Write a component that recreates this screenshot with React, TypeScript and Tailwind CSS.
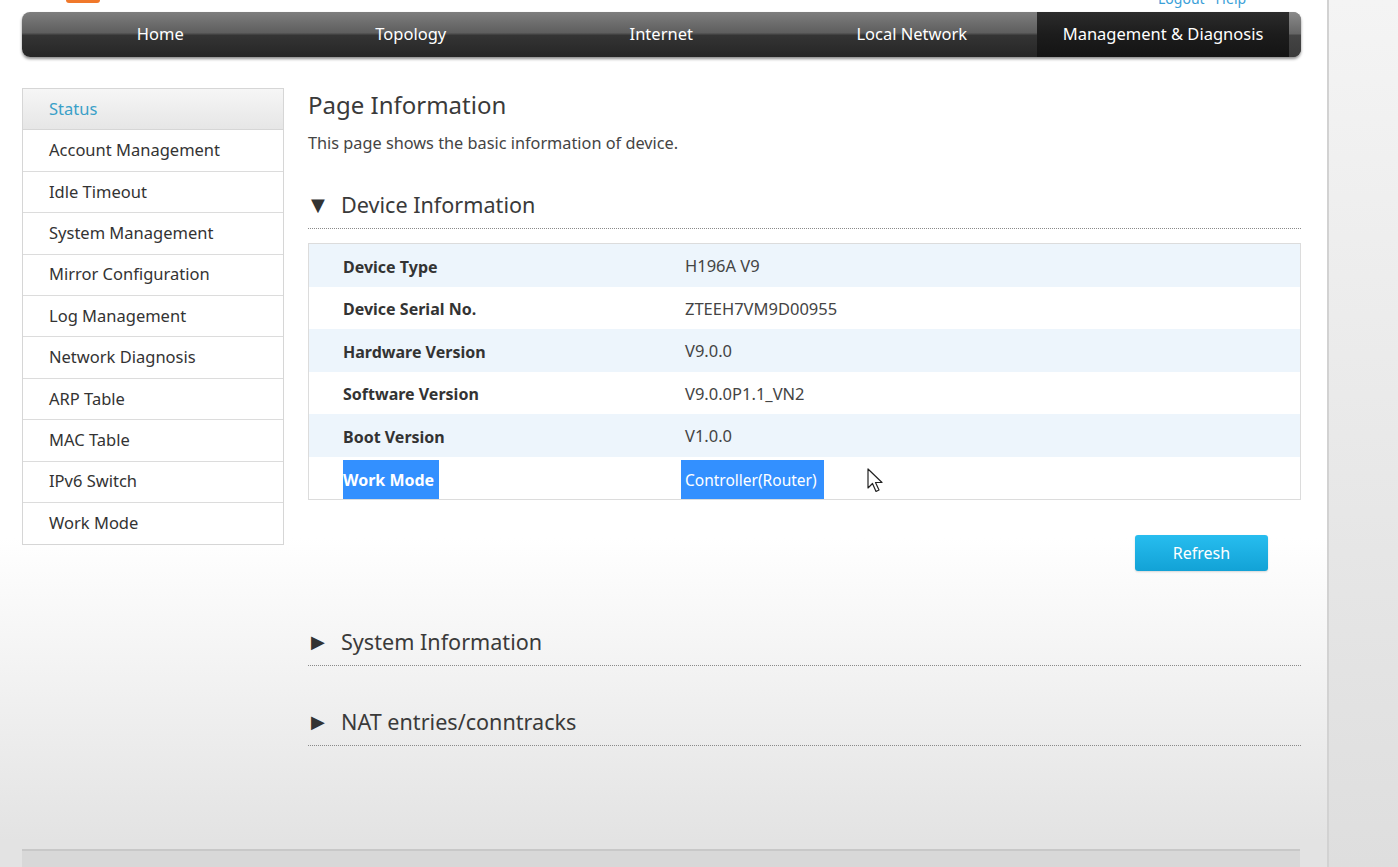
import React from 'react';

const tabs = ['Home', 'Topology', 'Internet', 'Local Network', 'Management & Diagnosis'];

const menu = [
  'Status',
  'Account Management',
  'Idle Timeout',
  'System Management',
  'Mirror Configuration',
  'Log Management',
  'Network Diagnosis',
  'ARP Table',
  'MAC Table',
  'IPv6 Switch',
  'Work Mode',
];

const rows = [
  { label: 'Device Type', value: 'H196A V9' },
  { label: 'Device Serial No.', value: 'ZTEEH7VM9D00955' },
  { label: 'Hardware Version', value: 'V9.0.0' },
  { label: 'Software Version', value: 'V9.0.0P1.1_VN2' },
  { label: 'Boot Version', value: 'V1.0.0' },
];

const font = { fontFamily: '"Noto Sans", "Open Sans", sans-serif' };

const SectionHeader: React.FC<{ title: string; open?: boolean }> = ({ title, open }) => (
  <div className="flex items-center h-[39px] pb-[9px] border-b border-dotted border-[#8a8a8a]">
    <span className="w-[33px] pl-[3px] text-[18px] leading-[30px] text-[#333]" style={{ fontFamily: '"DejaVu Sans", sans-serif' }}>
      {open ? '▼' : '▶'}
    </span>
    <span className="text-[21.6px] text-[#3a3a3a] leading-[30px]">{title}</span>
  </div>
);

const Cursor = () => (
  <svg width="18" height="26" viewBox="0 0 18 26" className="absolute left-[558px] top-[11px]">
    <path d="M1 1 L1 20 L5.5 15.5 L9 23.5 L12 22 L8.5 14.5 L15 14.5 Z" fill="#fff" stroke="#222" strokeWidth="1.2" strokeLinejoin="round" />
  </svg>
);

export default function App() {
  return (
    <div className="w-[1398px] h-[867px] overflow-hidden flex" style={font}>
      <div className="w-[1327px] h-full flex flex-col bg-[linear-gradient(to_bottom,#ffffff_0%,#ffffff_62%,#e3e3e3_97%)]">
        {/* top strip, the rest of the header is scrolled out of view */}
        <div className="relative h-[12px] shrink-0">
          <div className="absolute left-[66px] -top-[6px] w-[34px] h-[9px] rounded-b-[3px] bg-[#f0782a]" />
          <div className="absolute left-[1158px] -top-[12px] text-[14px] text-[#3aa0d8]">Logout · Help</div>
        </div>

        {/* nav bar */}
        <div className="ml-[22px] w-[1279px] h-[45px] shrink-0 flex rounded-[8px] overflow-hidden pl-[13px] bg-[linear-gradient(to_bottom,#7e7e7e_0%,#5e5e5e_46%,#343434_52%,#262626_100%)] shadow-[0_2px_3px_rgba(0,0,0,0.45)]">
          {tabs.map((t, i) => (
            <div
              key={t}
              className={
                i === 4
                  ? 'w-[252px] flex items-center justify-center text-[16.5px] text-white bg-[linear-gradient(to_bottom,#2c2c2c_0%,#1c1c1c_50%,#141414_100%)]'
                  : 'w-[250.5px] flex items-center justify-center text-[16.5px] text-white'
              }
            >
              {t}
            </div>
          ))}
          <div className="flex-1 bg-[linear-gradient(to_bottom,#8a8a8a_0%,#666_48%,#444_52%,#3a3a3a_100%)]" />
        </div>

        <div className="flex flex-1">
          {/* side menu */}
          <div className="ml-[22px] mt-[31px] w-[262px] self-start border border-[#d6d6d6] bg-white">
            {menu.map((m, i) => (
              <div
                key={m}
                className={
                  i === 0
                    ? 'h-[41.4px] flex items-center pl-[26px] text-[16.5px] text-[#3aa0c8] border-b border-[#d6d6d6] bg-[linear-gradient(to_bottom,#f6f6f6,#e6e6e6)]'
                    : 'h-[41.4px] flex items-center pl-[26px] text-[16.5px] text-[#333] border-b border-[#dcdcdc] last:border-b-0'
                }
              >
                {m}
              </div>
            ))}
          </div>

          {/* content */}
          <div className="ml-[24px] w-[993px] pt-[32px]">
            <h1 className="text-[24px] leading-[32px] text-[#3a3a3a]">Page Information</h1>
            <p className="mt-[12px] text-[16.3px] leading-[20px] text-[#444]">This page shows the basic information of device.</p>

            <div className="mt-[37px]">
              <SectionHeader title="Device Information" open />
            </div>

            <div className="mt-[14px] border border-[#dcdcdc] bg-white">
              {rows.map((r, i) => (
                <div
                  key={r.label}
                  className={
                    i % 2 === 0
                      ? 'h-[42.5px] flex items-center pt-[3px] bg-[#edf5fc]'
                      : 'h-[42.5px] flex items-center pt-[3px] bg-white'
                  }
                >
                  <div className="w-[376px] pl-[34px] text-[16px] font-bold text-[#333]">{r.label}</div>
                  <div className="text-[16.5px] text-[#444]">{r.value}</div>
                </div>
              ))}
              <div className="relative h-[42.5px] flex items-stretch bg-white">
                <div className="w-[376px] pl-[34px] pt-[3px] flex">
                  <span className="w-[96px] flex items-center pt-[2px] bg-[#3390ff] text-[16px] font-bold text-white whitespace-nowrap">
                    Work Mode
                  </span>
                </div>
                <div className="-ml-[4px] pt-[3px] flex">
                  <span className="w-[143px] flex items-center pt-[2px] pl-[4px] bg-[#3390ff] text-[15.5px] text-white whitespace-nowrap">
                    Controller(Router)
                  </span>
                </div>
                <Cursor />
              </div>
            </div>

            <div className="mt-[35px] flex justify-end pr-[33px]">
              <button className="w-[133px] h-[36px] rounded-[3px] text-[16px] text-white bg-[linear-gradient(to_bottom,#27bdef,#12a2d6)] shadow-[0_1px_2px_rgba(0,0,0,0.15)]">
                Refresh
              </button>
            </div>

            <div className="mt-[56px]">
              <SectionHeader title="System Information" />
            </div>
            <div className="mt-[41px]">
              <SectionHeader title="NAT entries/conntracks" />
            </div>
          </div>
        </div>

        {/* footer edge */}
        <div className="ml-[22px] w-[1278px] h-[18px] shrink-0 border-t-2 border-[#c8c8c8] bg-[#d8d8d8]" />
      </div>

      {/* right gutter */}
      <div className="flex-1 h-full border-l-2 border-[#d2d2d2] bg-[linear-gradient(to_bottom,#f4f4f4,#dedede)]" />
    </div>
  );
}
